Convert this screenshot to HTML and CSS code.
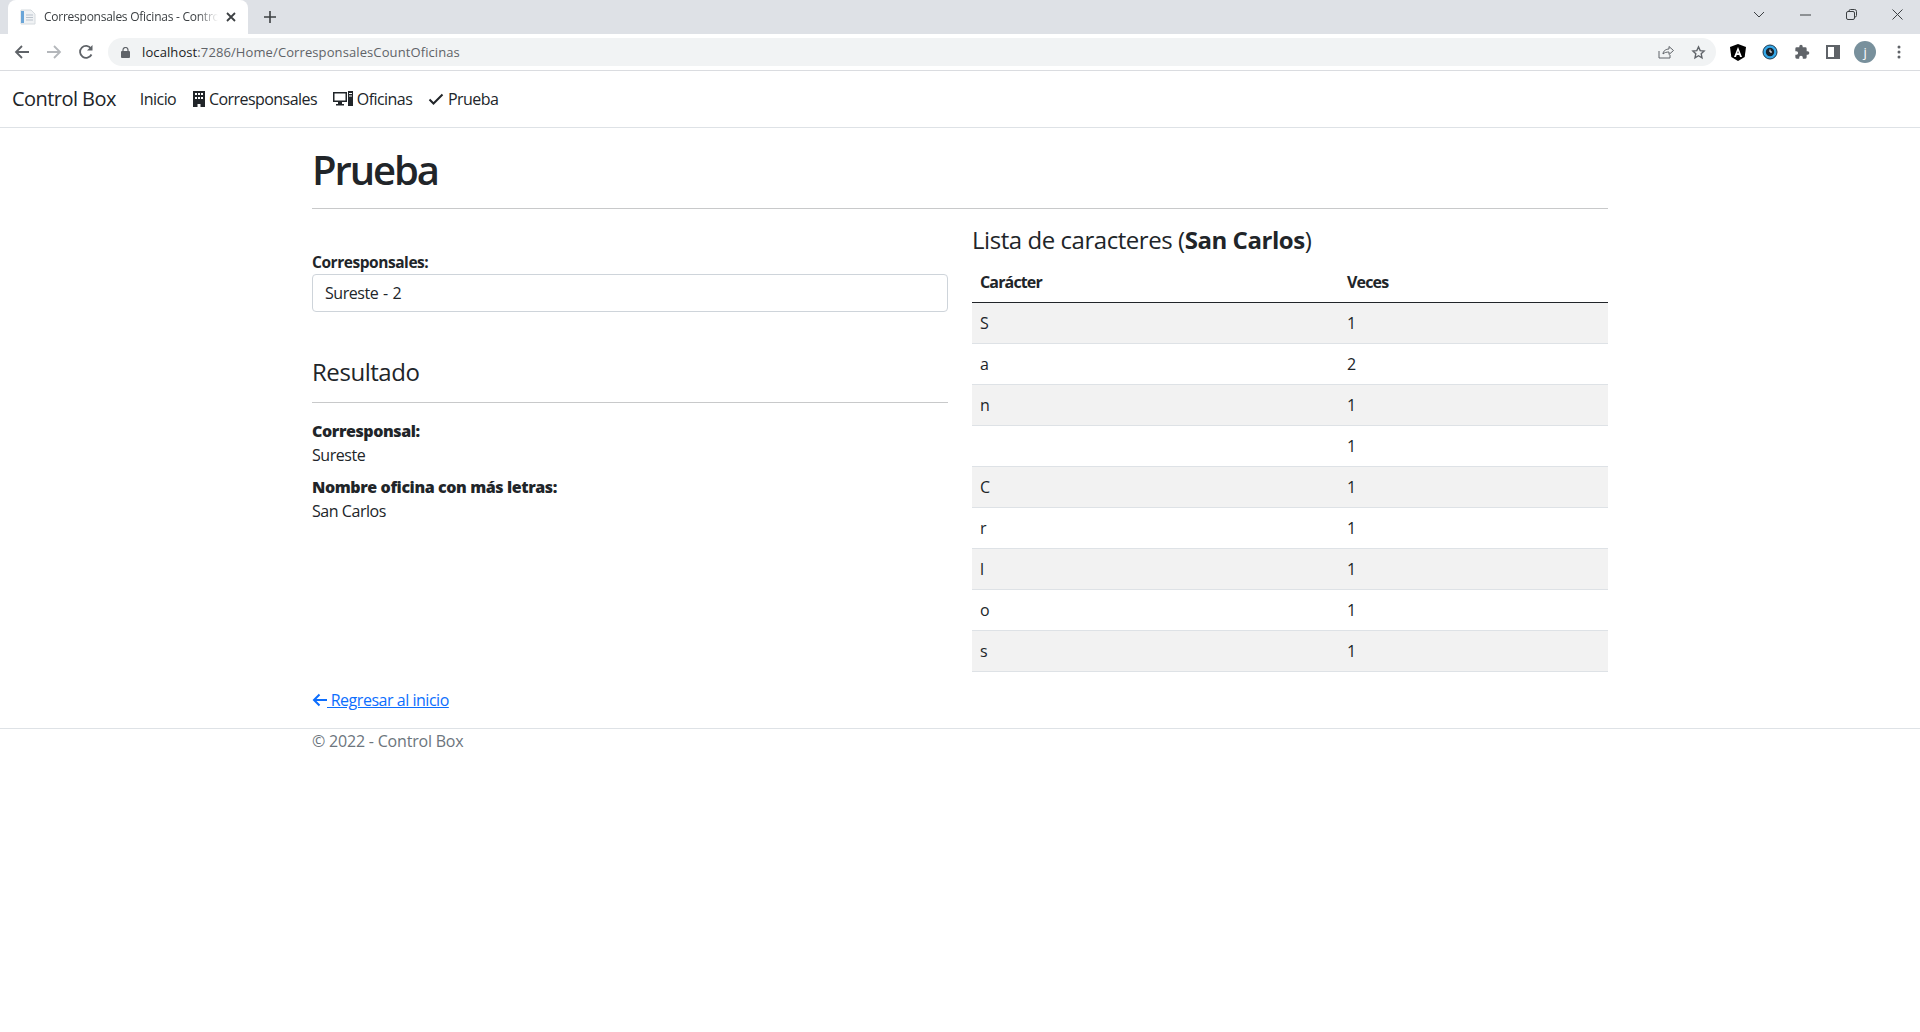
FILE: index.html
```html
<!DOCTYPE html>
<html lang="es">
<head>
  <meta charset="UTF-8">
  <meta name="viewport" content="width=device-width, initial-scale=1.0">
  <title>Corresponsales Oficinas - Control Box</title>
  <link rel="stylesheet" href="styles.css">
</head>
<body>
  <div class="browser-tabs">
    <div class="tab">
      <svg class="tab-favicon" width="16" height="16" viewBox="0 0 16 16"><path d="M1 1h10l4 4v10H1z" fill="#f0f2f4" stroke="#d5dade"/><rect x="1" y="2" width="3" height="12" fill="#6aa5d8"/><path d="M6 6h7M6 8.500h7M6 11h7" stroke="#b9c2cc" fill="none"/></svg>
      <span class="tab-title">Corresponsales Oficinas - Control Box</span>
      <svg class="tab-close" width="10" height="10" viewBox="0 0 10 10"><path d="M1 1l8 8M9 1l-8 8" stroke="#3c4043" stroke-width="1.800" fill="none"/></svg>
    </div>
    <svg class="tab-new" width="12" height="12" viewBox="0 0 12 12"><path d="M6 0v12M0 6h12" stroke="#3c4043" stroke-width="1.600" fill="none"/></svg>
    <div class="win-controls">
      <svg width="12" height="8" viewBox="0 0 12 8"><path d="M1 1l5 5 5-5" stroke="#3c4043" fill="none"/></svg>
      <svg width="11" height="2" viewBox="0 0 11 2"><path d="M0 1h11" stroke="#3c4043" fill="none"/></svg>
      <svg width="11" height="11" viewBox="0 0 11 11"><rect x="0.500" y="2.500" width="8" height="8" rx="1.500" stroke="#3c4043" fill="none"/><path d="M3 2.500v-.500a1.500 1.500 0 0 1 1.500-1.500h4a2 2 0 0 1 2 2v4a1.500 1.500 0 0 1-1.500 1.500" stroke="#3c4043" fill="none"/></svg>
      <svg width="11" height="11" viewBox="0 0 11 11"><path d="M.5.500l10 10M10.500.500l-10 10" stroke="#3c4043" fill="none"/></svg>
    </div>
  </div>

  <div class="browser-toolbar">
    <svg class="tool-btn" width="16" height="16" viewBox="0 0 16 16"><path d="M15 8H2M8 2L2 8l6 6" stroke="#5f6368" stroke-width="1.800" fill="none"/></svg>
    <svg class="tool-btn" width="16" height="16" viewBox="0 0 16 16"><path d="M1 8h13M8 2l6 6-6 6" stroke="#b4b7bb" stroke-width="1.800" fill="none"/></svg>
    <svg class="tool-btn" width="16" height="16" viewBox="0 0 16 16"><path d="M13.500 10.500A6 6 0 1 1 13 4.500" stroke="#5f6368" stroke-width="1.800" fill="none"/><path d="M14.500 1v5.500H9z" fill="#5f6368"/></svg>
    <div class="omnibox">
      <svg width="9" height="11" viewBox="0 0 9 11"><rect y="4" width="9" height="7" rx="1" fill="#5f6368"/><path d="M2 4.500V3a2.500 2.500 0 0 1 5 0v1.500" stroke="#5f6368" stroke-width="1.200" fill="none"/></svg>
      <span class="url"><span class="url-host">localhost</span>:7286/Home/CorresponsalesCountOficinas</span>
      <div class="omnibox-actions">
        <svg width="16" height="14" viewBox="0 0 16 14"><path d="M1 6v7h11V10" stroke="#5f6368" fill="none"/><path d="M5 9c0-3 3-5 6-5V1.500L15.500 5.500 11 9.500V7c-2.500 0-4.500.500-6 2z" stroke="#5f6368" fill="none"/></svg>
        <svg width="15" height="15" viewBox="0 0 24 24"><path d="M12 3l2.700 6 6.300.700-4.700 4.300 1.300 6.500L12 17.200 6.400 20.500l1.300-6.500L3 9.700 9.300 9z" stroke="#5f6368" stroke-width="2.200" fill="none"/></svg>
      </div>
    </div>
    <div class="ext-icons">
      <svg width="16" height="17" viewBox="0 0 16 17"><path d="M8 0l8 3-1.300 10L8 17l-6.700-4L0 3z" fill="#000"/><path d="M8 3L4 13h2l.700-2h2.600l.700 2h2zM7.300 9.300L8 7l.7 2.300z" fill="#fff"/></svg>
      <svg width="16" height="16" viewBox="0 0 16 16"><circle cx="8" cy="8" r="7" fill="#35a8e8" stroke="#1c3a52" stroke-width="1"/><circle cx="8" cy="8" r="4.200" fill="#16212c"/><path d="M8 5.500V8h2" stroke="#fff" fill="none"/></svg>
      <svg width="16" height="16" viewBox="0 0 24 24"><path d="M20.500 11H19V7a2 2 0 0 0-2-2h-4V3.500a2.500 2.500 0 0 0-5 0V5H4a2 2 0 0 0-2 2v3.800h1.500a2.700 2.700 0 0 1 0 5.400H2V20a2 2 0 0 0 2 2h3.800v-1.500a2.700 2.700 0 0 1 5.400 0V22H17a2 2 0 0 0 2-2v-4h1.500a2.500 2.500 0 0 0 0-5z" fill="#5f6368"/></svg>
      <svg width="14" height="14" viewBox="0 0 14 14"><rect x="1" y="1" width="12" height="12" fill="#fff" stroke="#5f6368" stroke-width="2"/><rect x="8" y="1" width="5" height="12" fill="#5f6368"/></svg>
      <span class="avatar">j</span>
      <svg class="kebab" width="4" height="14" viewBox="0 0 4 14"><circle cx="2" cy="2" r="1.500" fill="#5f6368"/><circle cx="2" cy="7" r="1.500" fill="#5f6368"/><circle cx="2" cy="12" r="1.500" fill="#5f6368"/></svg>
    </div>
  </div>

  <nav class="navbar">
    <a class="navbar-brand" href="#">Control Box</a>
    <ul class="nav-list">
      <li><a href="#"><span class="nav-text">Inicio</span></a></li>
      <li><a href="#"><svg class="icon-building" width="12" height="16" viewBox="0 0 12 16"><path d="M0 0h12v16H7.500v-3h-3v3H0z" fill="#212529"/><path d="M2 2h2v2H2zM5 2h2v2H5zM8 2h2v2H8zM2 6h2v2H2zM5 6h2v2H5zM8 6h2v2H8z" fill="#fff"/></svg> <span class="nav-text">Corresponsales</span></a></li>
      <li><a href="#"><svg width="20" height="16" viewBox="0 0 20 16"><path d="M0 1h14v10H9v2h2v1.500H3V13h2v-2H0zM1.500 2.500v7h11v-7z" fill="#212529"/><path d="M15 0h5v15h-5z" fill="#212529"/><path d="M16 2h3v1h-3zM16 4.500h3v1h-3z" fill="#fff"/></svg> <span class="nav-text">Oficinas</span></a></li>
      <li><a href="#"><svg width="16" height="16" viewBox="0 0 16 16"><path d="M1.500 8.500l4 4 9-9" stroke="#212529" stroke-width="2" fill="none"/></svg> <span class="nav-text">Prueba</span></a></li>
    </ul>
  </nav>

  <div class="container">
    <h1>Prueba</h1>
    <hr class="title-line">
    <div class="row">
      <div class="col">
        <div class="form-group">
          <label>Corresponsales:</label>
          <div class="form-select">Sureste - 2</div>
        </div>
        <h4 class="result-title">Resultado</h4>
        <hr class="result-line">
        <div class="result-item">
          <b>Corresponsal:</b>
          <p>Sureste</p>
        </div>
        <div class="result-item">
          <b>Nombre oficina con más letras:</b>
          <p>San Carlos</p>
        </div>
      </div>
      <div class="col">
        <h4 class="table-title">Lista de caracteres (<b>San Carlos</b>)</h4>
        <table>
          <thead>
            <tr><th class="col-char">Carácter</th><th>Veces</th></tr>
          </thead>
          <tbody>
            <tr><td>S</td><td>1</td></tr>
            <tr><td>a</td><td>2</td></tr>
            <tr><td>n</td><td>1</td></tr>
            <tr><td>&nbsp;</td><td>1</td></tr>
            <tr><td>C</td><td>1</td></tr>
            <tr><td>r</td><td>1</td></tr>
            <tr><td>l</td><td>1</td></tr>
            <tr><td>o</td><td>1</td></tr>
            <tr><td>s</td><td>1</td></tr>
          </tbody>
        </table>
      </div>
    </div>
    <a class="back-link" href="#"><svg width="16" height="16" viewBox="0 0 16 16"><path d="M15 8H2M7.500 2.500L2 8l5.500 5.500" stroke="#0d6efd" stroke-width="2" fill="none"/></svg> Regresar al inicio</a>
  </div>

  <footer class="footer">
    <div class="footer-text">© 2022 - Control Box</div>
  </footer>
</body>
</html>
```

FILE: styles.css
```css
:root {
  --text-dark: #212529;
  --line: #dee2e6;
  --chrome-bg: #dee1e6;
  --ui-font: "Open Sans", "Noto Sans", Arial, sans-serif;
}
* { box-sizing: border-box; }
body {
  margin: 0;
  background: #fff;
  color: var(--text-dark);
  font-family: var(--ui-font);
  font-size: 16px;
  line-height: 24px;
  letter-spacing: -0.45px;
}

/* browser chrome */
.browser-tabs {
  display: flex;
  align-items: center;
  height: 34px;
  padding-left: 8px;
  background: var(--chrome-bg);
}
.tab {
  display: flex;
  align-items: center;
  align-self: flex-end;
  width: 240px;
  height: 34px;
  padding: 0 12px;
  gap: 8px;
  background: #fff;
  border-radius: 8px 8px 0 0;
}
.tab-favicon { flex: none; }
.tab-title {
  flex: 1;
  overflow: hidden;
  white-space: nowrap;
  font-size: 12px;
  letter-spacing: -0.25px;
  color: #3c4043;
  -webkit-mask-image: linear-gradient(to right, #000 88%, transparent);
  mask-image: linear-gradient(to right, #000 88%, transparent);
}
.tab-close { flex: none; }
.tab-new { margin-left: 16px; }
.win-controls {
  display: flex;
  align-items: center;
  gap: 35px;
  margin-left: auto;
  margin-right: 17px;
  margin-top: -5px;
}
.browser-toolbar {
  display: flex;
  align-items: center;
  height: 37px;
  padding-left: 14px;
  border-bottom: 1px solid #dadce0;
}
.tool-btn { margin-right: 16px; }
.omnibox {
  display: flex;
  align-items: center;
  flex: 1;
  height: 28px;
  margin-left: -2px;
  padding-left: 13px;
  gap: 12px;
  background: #f1f3f4;
  border-radius: 14px;
}
.url {
  font-size: 13px;
  letter-spacing: 0.1px;
  color: #5f6368;
}
.url-host { color: #202124; }
.omnibox-actions {
  display: flex;
  align-items: center;
  gap: 17px;
  margin-left: auto;
  margin-right: 10px;
}
.ext-icons {
  display: flex;
  align-items: center;
  gap: 16px;
  width: 204px;
  padding-left: 14px;
}
.avatar {
  width: 22px;
  height: 22px;
  margin: 0 -3px 0 -2px;
  border-radius: 50%;
  background: #78909c;
  color: #fff;
  font-size: 13px;
  line-height: 22px;
  text-align: center;
}
.kebab { margin-left: 8px; }

/* navbar */
.navbar {
  display: flex;
  align-items: center;
  height: 57px;
  padding: 0 12px;
  border-bottom: 1px solid var(--line);
}
.navbar a {
  color: var(--text-dark);
  text-decoration: none;
}
.navbar-brand {
  margin-right: 16px;
  font-size: 20px;
  letter-spacing: -0.55px;
}
.nav-list {
  display: flex;
  margin: 0;
  padding: 0;
  list-style: none;
}
.nav-list a { display: block; padding: 0 8px; }
.nav-list svg { vertical-align: -2px; }
.nav-list .icon-building { margin-left: 1px; }
.nav-text { letter-spacing: -0.55px; }

/* content */
.container {
  width: 1296px;
  margin: 0 auto;
}
h1 {
  margin: 0;
  padding-top: 18px;
  font-size: 40px;
  line-height: 48px;
  font-weight: 600;
  letter-spacing: -2.1px;
}
hr {
  height: 1px;
  border: 0;
  background: #c8c9ca;
}
.title-line { margin: 14px 0 16px; }
.row {
  display: grid;
  grid-template-columns: 1fr 1fr;
  gap: 24px;
}
.form-group { margin-top: 25px; }
label {
  display: block;
  font-weight: 700;
  font-size: 15.500px;
}
.form-select {
  height: 38px;
  padding: 6px 12px;
  border: 1px solid #ced4da;
  border-radius: 4px;
  word-spacing: 1px;
}
h4 {
  margin: 0;
  font-size: 24px;
  line-height: 29px;
  font-weight: 500;
}
.result-title { margin-top: 45px; }
.result-line { margin: 16px 0 16px; }
.result-item { margin-bottom: 8px; }
.result-item b {
  display: block;
  font-weight: 800;
  letter-spacing: -0.4px;
}
.result-item p { margin: 0; }
.table-title { margin-bottom: 8px; }
.table-title b { font-weight: 700; }
table {
  width: 100%;
  border-collapse: collapse;
}
thead th {
  padding: 8px;
  text-align: left;
  font-weight: 700;
  letter-spacing: -0.85px;
  border-bottom: 1px solid var(--text-dark);
}
.col-char { width: 367px; }
tbody td {
  padding: 8px;
  border-bottom: 1px solid var(--line);
}
tbody tr:nth-child(odd) { background: #f2f2f2; }
.back-link {
  display: inline-block;
  margin-top: 16px;
  color: #0d6efd;
  letter-spacing: -0.47px;
}
.back-link svg { vertical-align: -2px; margin-right: -1px; }

/* footer */
.footer {
  margin-top: 16px;
  border-top: 1px solid var(--line);
}
.footer-text {
  width: 1296px;
  margin: 0 auto;
  color: #6c757d;
  letter-spacing: -0.2px;
}
```
